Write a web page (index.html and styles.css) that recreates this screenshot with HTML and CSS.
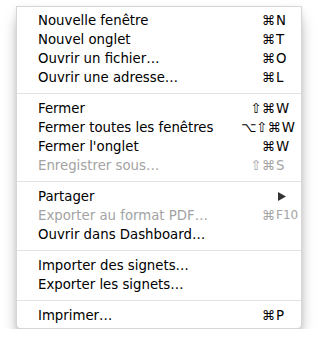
FILE: index.html
```html
<!DOCTYPE html>
<html lang="fr">
<head>
<meta charset="utf-8">
<title>Menu Fichier</title>
<link rel="stylesheet" href="styles.css">
</head>
<body>
<div class="menu">
  <div class="item"><span class="label">Nouvelle fenêtre</span><span class="sc"><span class="mod">⌘</span><span class="key">N</span></span></div>
  <div class="item"><span class="label">Nouvel onglet</span><span class="sc"><span class="mod">⌘</span><span class="key">T</span></span></div>
  <div class="item"><span class="label">Ouvrir un fichier…</span><span class="sc"><span class="mod">⌘</span><span class="key">O</span></span></div>
  <div class="item"><span class="label">Ouvrir une adresse…</span><span class="sc"><span class="mod">⌘</span><span class="key">L</span></span></div>
  <div class="sep"></div>
  <div class="item"><span class="label">Fermer</span><span class="sc"><span class="mod">⇧⌘</span><span class="key">W</span></span></div>
  <div class="item"><span class="label">Fermer toutes les fenêtres</span><span class="sc"><span class="mod">⌥⇧⌘</span><span class="key">W</span></span></div>
  <div class="item"><span class="label">Fermer l'onglet</span><span class="sc"><span class="mod">⌘</span><span class="key">W</span></span></div>
  <div class="item disabled"><span class="label">Enregistrer sous…</span><span class="sc"><span class="mod">⇧⌘</span><span class="key">S</span></span></div>
  <div class="sep"></div>
  <div class="item"><span class="label">Partager</span><span class="sc"><svg class="arrow" width="8" height="9" viewBox="0 0 8 9"><path d="M0 0 L8 4.5 L0 9 Z" fill="#333"/></svg></span></div>
  <div class="item disabled"><span class="label">Exporter au format PDF…</span><span class="sc"><span class="mod">⌘</span><span class="key small">F10</span></span></div>
  <div class="item"><span class="label">Ouvrir dans Dashboard…</span></div>
  <div class="sep"></div>
  <div class="item"><span class="label">Importer des signets…</span></div>
  <div class="item"><span class="label">Exporter les signets…</span></div>
  <div class="sep"></div>
  <div class="item"><span class="label">Imprimer…</span><span class="sc"><span class="mod">⌘</span><span class="key">P</span></span></div>
</div>
</body>
</html>
```

FILE: styles.css
```css
html, body {
  margin: 0;
  padding: 0;
  background: #ffffff;
}

body {
  padding: 6px 0 0 16px;
  font-family: "DejaVu Sans", "Liberation Sans", sans-serif;
  font-size: 13.3px;
  color: #000;
}

.menu {
  width: 286px;
  box-sizing: border-box;
  background: #fff;
  border: 1px solid rgba(0, 0, 0, 0.16);
  border-radius: 0 0 5px 5px;
  padding: 4px 0 3px 0;
  box-shadow: 0 10px 16px -3px rgba(0, 0, 0, 0.35), 0 2px 6px rgba(0, 0, 0, 0.08);
}

.item {
  display: flex;
  justify-content: space-between;
  align-items: center;
  height: 19px;
  line-height: 19px;
  padding: 0 0 0 21px;
  white-space: nowrap;
}

.item.disabled {
  color: #a3a3a3;
}

.sc {
  display: flex;
  align-items: center;
  width: 60px;
  justify-content: flex-end;
}

.mod {
  flex: 1;
  text-align: right;
  padding-right: 1px;
}

.key {
  width: 25px;
  text-align: left;
}

.key.small {
  font-size: 12px;
}

.arrow {
  display: block;
  margin-right: 15px;
}

.sep {
  height: 12px;
  display: flex;
  align-items: center;
}

.sep::before {
  content: "";
  display: block;
  width: 100%;
  height: 1px;
  background: #e3e3e3;
}
```
